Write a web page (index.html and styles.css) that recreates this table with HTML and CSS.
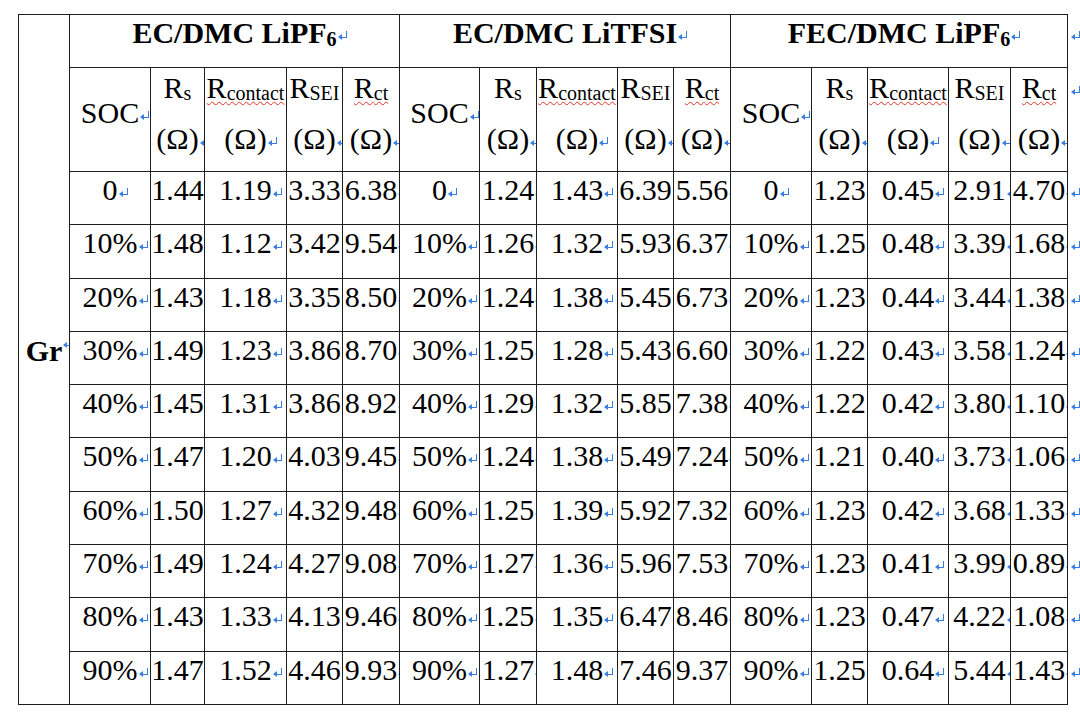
FILE: index.html
```html
<!DOCTYPE html>
<html lang="en">
<head>
<meta charset="utf-8">
<title>EIS fitting results</title>
<link rel="stylesheet" href="styles.css">
</head>
<body>
<div class="page">
  <div class="sheet">
    <div class="c gr"><b>Gr</b><i class="pm"></i></div>

    <div class="c h1">EC/DMC LiPF<sub class="s6">6</sub><i class="pm"></i></div>
    <div class="c h1">EC/DMC LiTFSI<i class="pm"></i></div>
    <div class="c h1">FEC/DMC LiPF<sub class="s6">6</sub><i class="pm"></i></div>

    <div class="c h2 soc">SOC<i class="pm"></i></div>
    <div class="c h2"><span>R<sub>s</sub></span><span>(Ω)<i class="pm"></i></span></div>
    <div class="c h2"><span class="sp">R<sub>contact</sub></span><span>(Ω)<i class="pm"></i></span></div>
    <div class="c h2"><span>R<sub>SEI</sub></span><span>(Ω)<i class="pm"></i></span></div>
    <div class="c h2"><span class="sp">R<sub>ct</sub></span><span>(Ω)<i class="pm"></i></span></div>
    <div class="c h2 soc">SOC<i class="pm"></i></div>
    <div class="c h2"><span>R<sub>s</sub></span><span>(Ω)<i class="pm"></i></span></div>
    <div class="c h2"><span class="sp">R<sub>contact</sub></span><span>(Ω)<i class="pm"></i></span></div>
    <div class="c h2"><span>R<sub>SEI</sub></span><span>(Ω)<i class="pm"></i></span></div>
    <div class="c h2"><span class="sp">R<sub>ct</sub></span><span>(Ω)<i class="pm"></i></span></div>
    <div class="c h2 soc">SOC<i class="pm"></i></div>
    <div class="c h2"><span>R<sub>s</sub></span><span>(Ω)<i class="pm"></i></span></div>
    <div class="c h2"><span class="sp">R<sub>contact</sub></span><span>(Ω)<i class="pm"></i></span></div>
    <div class="c h2"><span>R<sub>SEI</sub></span><span>(Ω)<i class="pm"></i></span></div>
    <div class="c h2"><span class="sp">R<sub>ct</sub></span><span>(Ω)<i class="pm"></i></span></div>

    <div class="c">0<i class="pm"></i></div><div class="c">1.44<i class="pm"></i></div><div class="c">1.19<i class="pm"></i></div><div class="c">3.33<i class="pm"></i></div><div class="c">6.38<i class="pm"></i></div>
    <div class="c">0<i class="pm"></i></div><div class="c">1.24<i class="pm"></i></div><div class="c">1.43<i class="pm"></i></div><div class="c">6.39<i class="pm"></i></div><div class="c">5.56<i class="pm"></i></div>
    <div class="c">0<i class="pm"></i></div><div class="c">1.23<i class="pm"></i></div><div class="c">0.45<i class="pm"></i></div><div class="c">2.91<i class="pm"></i></div><div class="c">4.70<i class="pm"></i></div>

    <div class="c">10%<i class="pm"></i></div><div class="c">1.48<i class="pm"></i></div><div class="c">1.12<i class="pm"></i></div><div class="c">3.42<i class="pm"></i></div><div class="c">9.54<i class="pm"></i></div>
    <div class="c">10%<i class="pm"></i></div><div class="c">1.26<i class="pm"></i></div><div class="c">1.32<i class="pm"></i></div><div class="c">5.93<i class="pm"></i></div><div class="c">6.37<i class="pm"></i></div>
    <div class="c">10%<i class="pm"></i></div><div class="c">1.25<i class="pm"></i></div><div class="c">0.48<i class="pm"></i></div><div class="c">3.39<i class="pm"></i></div><div class="c">1.68<i class="pm"></i></div>

    <div class="c">20%<i class="pm"></i></div><div class="c">1.43<i class="pm"></i></div><div class="c">1.18<i class="pm"></i></div><div class="c">3.35<i class="pm"></i></div><div class="c">8.50<i class="pm"></i></div>
    <div class="c">20%<i class="pm"></i></div><div class="c">1.24<i class="pm"></i></div><div class="c">1.38<i class="pm"></i></div><div class="c">5.45<i class="pm"></i></div><div class="c">6.73<i class="pm"></i></div>
    <div class="c">20%<i class="pm"></i></div><div class="c">1.23<i class="pm"></i></div><div class="c">0.44<i class="pm"></i></div><div class="c">3.44<i class="pm"></i></div><div class="c">1.38<i class="pm"></i></div>

    <div class="c">30%<i class="pm"></i></div><div class="c">1.49<i class="pm"></i></div><div class="c">1.23<i class="pm"></i></div><div class="c">3.86<i class="pm"></i></div><div class="c">8.70<i class="pm"></i></div>
    <div class="c">30%<i class="pm"></i></div><div class="c">1.25<i class="pm"></i></div><div class="c">1.28<i class="pm"></i></div><div class="c">5.43<i class="pm"></i></div><div class="c">6.60<i class="pm"></i></div>
    <div class="c">30%<i class="pm"></i></div><div class="c">1.22<i class="pm"></i></div><div class="c">0.43<i class="pm"></i></div><div class="c">3.58<i class="pm"></i></div><div class="c">1.24<i class="pm"></i></div>

    <div class="c">40%<i class="pm"></i></div><div class="c">1.45<i class="pm"></i></div><div class="c">1.31<i class="pm"></i></div><div class="c">3.86<i class="pm"></i></div><div class="c">8.92<i class="pm"></i></div>
    <div class="c">40%<i class="pm"></i></div><div class="c">1.29<i class="pm"></i></div><div class="c">1.32<i class="pm"></i></div><div class="c">5.85<i class="pm"></i></div><div class="c">7.38<i class="pm"></i></div>
    <div class="c">40%<i class="pm"></i></div><div class="c">1.22<i class="pm"></i></div><div class="c">0.42<i class="pm"></i></div><div class="c">3.80<i class="pm"></i></div><div class="c">1.10<i class="pm"></i></div>

    <div class="c">50%<i class="pm"></i></div><div class="c">1.47<i class="pm"></i></div><div class="c">1.20<i class="pm"></i></div><div class="c">4.03<i class="pm"></i></div><div class="c">9.45<i class="pm"></i></div>
    <div class="c">50%<i class="pm"></i></div><div class="c">1.24<i class="pm"></i></div><div class="c">1.38<i class="pm"></i></div><div class="c">5.49<i class="pm"></i></div><div class="c">7.24<i class="pm"></i></div>
    <div class="c">50%<i class="pm"></i></div><div class="c">1.21<i class="pm"></i></div><div class="c">0.40<i class="pm"></i></div><div class="c">3.73<i class="pm"></i></div><div class="c">1.06<i class="pm"></i></div>

    <div class="c">60%<i class="pm"></i></div><div class="c">1.50<i class="pm"></i></div><div class="c">1.27<i class="pm"></i></div><div class="c">4.32<i class="pm"></i></div><div class="c">9.48<i class="pm"></i></div>
    <div class="c">60%<i class="pm"></i></div><div class="c">1.25<i class="pm"></i></div><div class="c">1.39<i class="pm"></i></div><div class="c">5.92<i class="pm"></i></div><div class="c">7.32<i class="pm"></i></div>
    <div class="c">60%<i class="pm"></i></div><div class="c">1.23<i class="pm"></i></div><div class="c">0.42<i class="pm"></i></div><div class="c">3.68<i class="pm"></i></div><div class="c">1.33<i class="pm"></i></div>

    <div class="c">70%<i class="pm"></i></div><div class="c">1.49<i class="pm"></i></div><div class="c">1.24<i class="pm"></i></div><div class="c">4.27<i class="pm"></i></div><div class="c">9.08<i class="pm"></i></div>
    <div class="c">70%<i class="pm"></i></div><div class="c">1.27<i class="pm"></i></div><div class="c">1.36<i class="pm"></i></div><div class="c">5.96<i class="pm"></i></div><div class="c">7.53<i class="pm"></i></div>
    <div class="c">70%<i class="pm"></i></div><div class="c">1.23<i class="pm"></i></div><div class="c">0.41<i class="pm"></i></div><div class="c">3.99<i class="pm"></i></div><div class="c">0.89<i class="pm"></i></div>

    <div class="c">80%<i class="pm"></i></div><div class="c">1.43<i class="pm"></i></div><div class="c">1.33<i class="pm"></i></div><div class="c">4.13<i class="pm"></i></div><div class="c">9.46<i class="pm"></i></div>
    <div class="c">80%<i class="pm"></i></div><div class="c">1.25<i class="pm"></i></div><div class="c">1.35<i class="pm"></i></div><div class="c">6.47<i class="pm"></i></div><div class="c">8.46<i class="pm"></i></div>
    <div class="c">80%<i class="pm"></i></div><div class="c">1.23<i class="pm"></i></div><div class="c">0.47<i class="pm"></i></div><div class="c">4.22<i class="pm"></i></div><div class="c">1.08<i class="pm"></i></div>

    <div class="c">90%<i class="pm"></i></div><div class="c">1.47<i class="pm"></i></div><div class="c">1.52<i class="pm"></i></div><div class="c">4.46<i class="pm"></i></div><div class="c">9.93<i class="pm"></i></div>
    <div class="c">90%<i class="pm"></i></div><div class="c">1.27<i class="pm"></i></div><div class="c">1.48<i class="pm"></i></div><div class="c">7.46<i class="pm"></i></div><div class="c">9.37<i class="pm"></i></div>
    <div class="c">90%<i class="pm"></i></div><div class="c">1.25<i class="pm"></i></div><div class="c">0.64<i class="pm"></i></div><div class="c">5.44<i class="pm"></i></div><div class="c">1.43<i class="pm"></i></div>
  </div>

  <div class="ends">
    <div class="end"><i class="pm"></i></div>
    <div class="end end-h2"><i class="pm"></i></div>
    <div class="end"><i class="pm"></i></div>
    <div class="end"><i class="pm"></i></div>
    <div class="end"><i class="pm"></i></div>
    <div class="end"><i class="pm"></i></div>
    <div class="end"><i class="pm"></i></div>
    <div class="end"><i class="pm"></i></div>
    <div class="end"><i class="pm"></i></div>
    <div class="end"><i class="pm"></i></div>
    <div class="end"><i class="pm"></i></div>
    <div class="end"><i class="pm"></i></div>
  </div>
</div>
</body>
</html>
```

FILE: styles.css
```css
html, body {
  margin: 0;
  padding: 0;
  background: #ffffff;
}

body {
  font-family: "Liberation Serif", "Times New Roman", serif;
  font-size: 30px;
  color: #000;
}

.page {
  display: flex;
  align-items: flex-start;
  padding: 14px 0 0 18px;
}

.sheet {
  display: grid;
  grid-template-columns: 50px 80px 53px 81px 55px 56px 79px 56px 80px 55px 56px 80px 55px 80px 61px 56px;
  grid-template-rows: 52px 103px repeat(10, 52.3px);
  gap: 1px;
  padding: 1px;
  background: #1e1e1e;
}

.c {
  background: #fff;
  overflow: hidden;
  white-space: nowrap;
  text-align: center;
  line-height: 34px;
  padding-top: 1px;
}

.gr {
  grid-column: 1;
  grid-row: 1 / -1;
  display: flex;
  align-items: center;
  justify-content: center;
  padding: 0 0 17px;
}

.h1 {
  grid-column: span 5;
  font-weight: bold;
}

.s6 {
  font-size: 20px;
  vertical-align: -3px;
  line-height: 0;
}

.h2 {
  display: flex;
  flex-direction: column;
  align-items: center;
  gap: 17px;
  padding-top: 3px;
}

.h2.soc {
  display: block;
  padding-top: 28px;
}

.h2 sub {
  font-size: 20px;
  vertical-align: -2px;
  line-height: 0;
}

.sp {
  text-decoration: underline wavy #e2322b;
  text-decoration-thickness: 1px;
  text-underline-offset: 3px;
  text-decoration-skip-ink: none;
}

/* Word paragraph mark */
.pm {
  display: inline-block;
  width: 0;
  height: 0;
  position: relative;
}

.pm::before {
  content: "";
  position: absolute;
  left: 4px;
  bottom: 5px;
  width: 5px;
  height: 6px;
  border-right: 1px solid #3a7de0;
  border-bottom: 1.3px solid #3a7de0;
}

.pm::after {
  content: "";
  position: absolute;
  left: 1px;
  bottom: 3px;
  width: 0;
  height: 0;
  border-top: 3px solid transparent;
  border-bottom: 3px solid transparent;
  border-right: 4px solid #3a7de0;
}

.ends {
  display: grid;
  grid-template-rows: 52px 103px repeat(10, 52.3px);
  row-gap: 1px;
  padding-top: 1px;
  margin-left: 2px;
  width: 14px;
  line-height: 34px;
}

.end {
  padding-top: 1px;
}

.end-h2 {
  padding-top: 3px;
}
```
